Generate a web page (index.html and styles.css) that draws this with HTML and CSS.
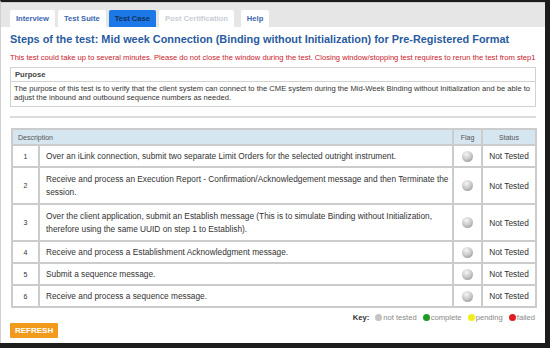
FILE: index.html
```html
<html lang="en">

<head>
    <meta charset="UTF-8" />
    <meta name="viewport" content="width=device-width, initial-scale=1.0" />
    <title>Test Case</title>
    <link rel="stylesheet" href="styles.css">
</head>

<body>
    <div class="frame">
        <div class="tabs">
            <a class="tab">Interview</a>
            <a class="tab">Test Suite</a>
            <a class="tab active">Test Case</a>
            <a class="tab disabled">Post Certification</a>
            <a class="tab">Help</a>
        </div>

        <div class="content">
            <h1 class="title">Steps of the test: Mid week Connection (Binding without Initialization) for Pre-Registered Format</h1>
            <p class="warning">This test could take up to several minutes. Please do not close the window during the test. Closing window/stopping test requires to rerun the test from step1</p>

            <div class="purpose">
                <div class="purpose-head">Purpose</div>
                <div class="purpose-body">The purpose of this test is to verify that the client system can connect to the CME system during the Mid-Week Binding without Initialization and be able to adjust the inbound and outbound sequence numbers as needed.</div>
            </div>

            <div class="separator"></div>

            <table class="steps">
                <thead>
                    <tr>
                        <th colspan="2" class="th-desc">Description</th>
                        <th class="th-flag">Flag</th>
                        <th class="th-status">Status</th>
                    </tr>
                </thead>
                <tbody>
                    <tr class="single">
                        <td class="num">1</td>
                        <td class="desc">Over an iLink connection, submit two separate Limit Orders for the selected outright instrument.</td>
                        <td class="flag"><span class="ball"></span></td>
                        <td class="status">Not Tested</td>
                    </tr>
                    <tr class="double">
                        <td class="num">2</td>
                        <td class="desc">Receive and process an Execution Report - Confirmation/Acknowledgement message and then Terminate the session.</td>
                        <td class="flag"><span class="ball"></span></td>
                        <td class="status">Not Tested</td>
                    </tr>
                    <tr class="double">
                        <td class="num">3</td>
                        <td class="desc">Over the client application, submit an Establish message (This is to simulate Binding without Initialization, therefore using the same UUID on step 1 to Establish).</td>
                        <td class="flag"><span class="ball"></span></td>
                        <td class="status">Not Tested</td>
                    </tr>
                    <tr class="single">
                        <td class="num">4</td>
                        <td class="desc">Receive and process a Establishment Acknowledgment message.</td>
                        <td class="flag"><span class="ball"></span></td>
                        <td class="status">Not Tested</td>
                    </tr>
                    <tr class="single">
                        <td class="num">5</td>
                        <td class="desc">Submit a sequence message.</td>
                        <td class="flag"><span class="ball"></span></td>
                        <td class="status">Not Tested</td>
                    </tr>
                    <tr class="single">
                        <td class="num">6</td>
                        <td class="desc">Receive and process a sequence message.</td>
                        <td class="flag"><span class="ball"></span></td>
                        <td class="status">Not Tested</td>
                    </tr>
                </tbody>
            </table>

            <div class="key">
                <b>Key:</b>
                <span class="dot grey"></span>not tested
                <span class="dot green"></span>complete
                <span class="dot yellow"></span>pending
                <span class="dot red"></span>failed
            </div>

            <button class="refresh">REFRESH</button>
        </div>
    </div>
</body>

</html>
```

FILE: styles.css
```css
html {
    background-color: #1c1c1c;
}

body {
    margin: 0;
    font-family: "Liberation Sans", Arial, sans-serif;
}

.frame {
    width: 545px;
    height: 343px;
    background-color: #ffffff;
    border-top: 2px solid #1c1c1c;
    border-left: 1px solid #d0d0d0;
    box-sizing: border-box;
    overflow: hidden;
}

.tabs {
    display: flex;
    gap: 3px;
    background-color: #e6e6e6;
    padding: 7px 0 0 9px;
    height: 25px;
    box-sizing: border-box;
    border-top: 1px solid #cfcfcf;
}

.tab {
    display: flex;
    align-items: center;
    padding: 0 6px;
    background-color: #ffffff;
    color: #3a66b0;
    font-size: 7.6px;
    font-weight: bold;
    border-radius: 2px 2px 0 0;
}

.tab.active {
    background-color: #1c78e6;
    color: #10305e;
}

.tab.disabled {
    color: #c8cdd6;
    margin-right: 4px;
}

.content {
    padding: 0 9px;
}

.title {
    margin: 6px 0 0 0;
    font-size: 10.9px;
    color: #2a5b9e;
    white-space: nowrap;
}

.warning {
    margin: 8px 0 5px 0;
    font-size: 7.6px;
    color: #c8202a;
    white-space: nowrap;
}

.purpose {
    border: 1px solid #d2d2d2;
    font-size: 7.6px;
    color: #333333;
}

.purpose-head {
    padding: 2px 4px;
    border-bottom: 1px solid #d2d2d2;
    font-weight: bold;
    color: #444444;
}

.purpose-body {
    padding: 2px 3px 4px 3px;
    line-height: 9px;
}

.separator {
    margin: 9px 0 10px 0;
    height: 2px;
    background-color: #dcdcdc;
}

.steps {
    width: 526px;
    margin-left: 1px;
    border-collapse: collapse;
    border: 2px solid #cccccc;
    font-size: 8.3px;
    color: #333333;
}

.steps th {
    background-color: #d6e6f1;
    font-weight: normal;
    font-size: 7px;
    color: #555555;
    height: 16px;
    border: 2px solid #cccccc;
}

.th-desc {
    text-align: left;
    padding-left: 5px;
}

.steps td {
    border: 2px solid #cccccc;
}

.single td {
    height: 22px;
}

.double td {
    height: 37px;
}

.num {
    width: 23px;
    text-align: center;
    font-size: 7px;
}

.desc {
    padding: 0 2px 0 6px;
    line-height: 13px;
}

.flag {
    width: 25px;
    text-align: center;
}

.status {
    width: 50px;
    text-align: center;
}

.ball {
    display: inline-block;
    width: 11px;
    height: 11px;
    border-radius: 50%;
    vertical-align: middle;
    background: radial-gradient(circle at 40% 30%, #f6f6f6 0%, #c8c8c8 50%, #888888 100%);
}

.key {
    margin-top: 5px;
    text-align: right;
    font-size: 7.6px;
    color: #888888;
    padding-right: 1px;
}

.key b {
    color: #333333;
}

.dot {
    display: inline-block;
    width: 7px;
    height: 7px;
    border-radius: 50%;
    vertical-align: -1px;
    margin: 0 1px 0 4px;
}

.dot.grey {
    background-color: #c4c4c4;
}

.dot.green {
    background-color: #1f9a24;
}

.dot.yellow {
    background-color: #f0ee1a;
}

.dot.red {
    background-color: #e21c24;
}

.refresh {
    display: block;
    margin-top: 1px;
    border: 0;
    padding: 3px 5px;
    background-color: #f29a1c;
    color: #ffffff;
    font-family: "Liberation Sans", Arial, sans-serif;
    font-size: 8px;
    font-weight: bold;
    border-radius: 1px;
}
```
